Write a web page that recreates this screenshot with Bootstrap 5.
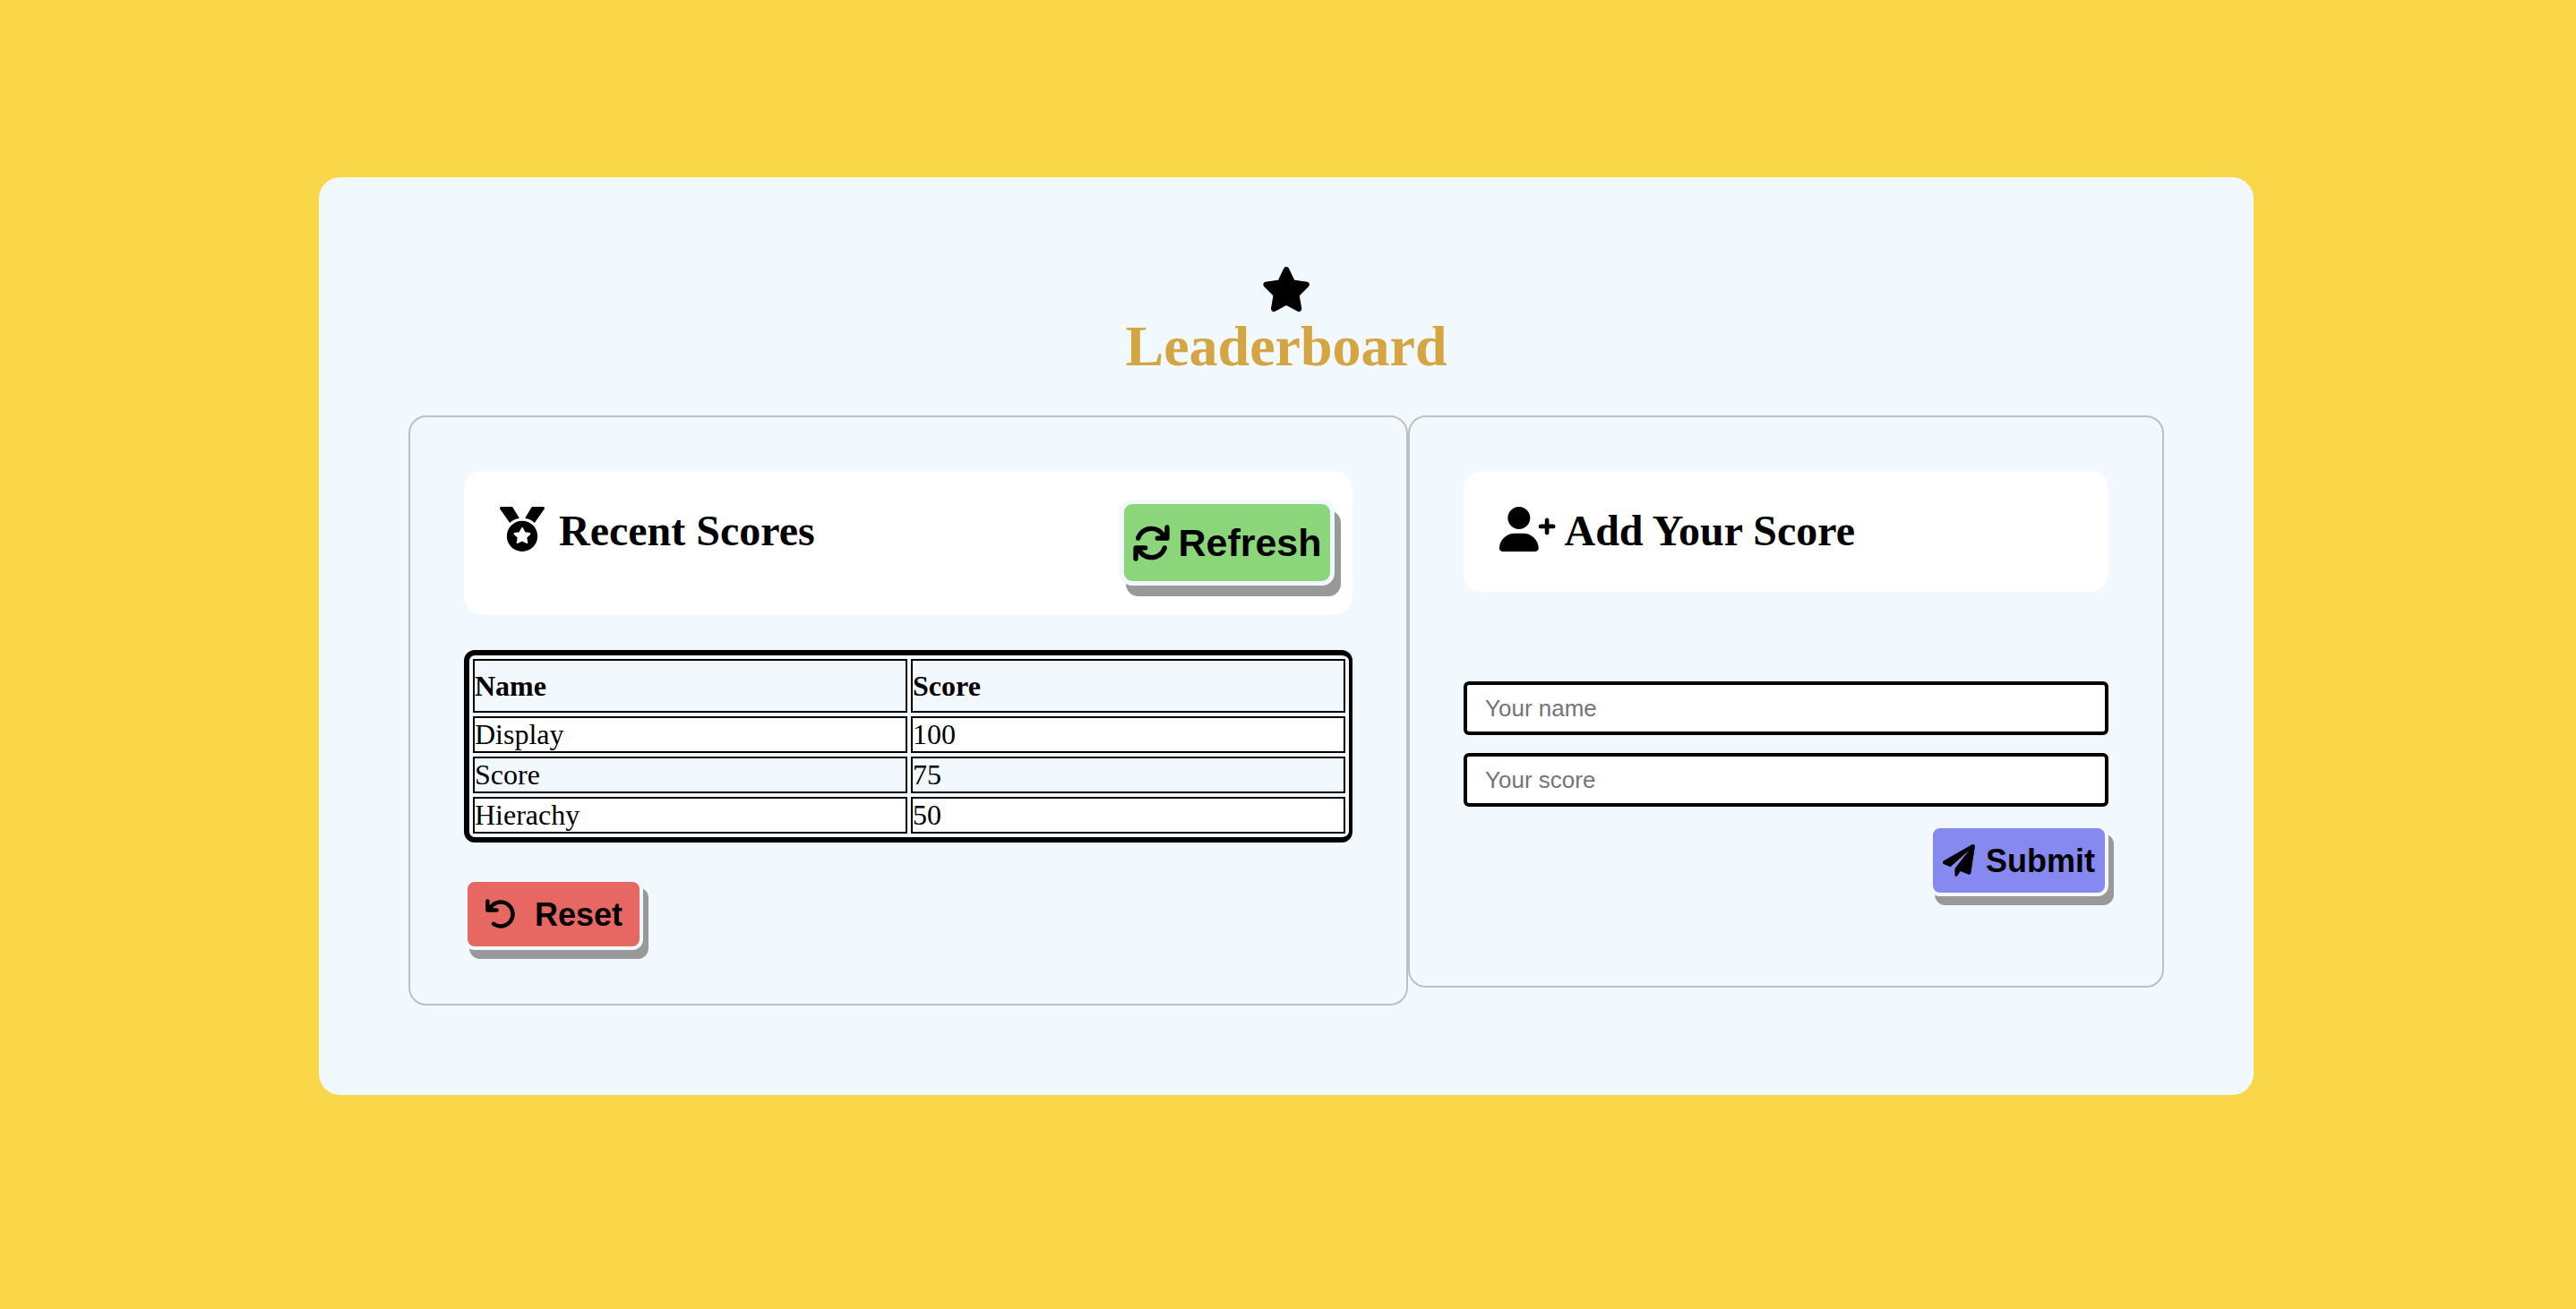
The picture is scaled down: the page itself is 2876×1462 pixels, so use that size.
<!DOCTYPE html>
<html lang="en">
<head>
<meta charset="utf-8">
<meta name="viewport" content="width=device-width, initial-scale=1">
<title>Leaderboard</title>
<link rel="stylesheet" href="https://cdn.jsdelivr.net/npm/bootstrap@5.3.0/dist/css/bootstrap.min.css">
<style>
  body { background: #fad749; color: #000; font-family: "Liberation Serif", "Times New Roman", serif; line-height: normal; padding: 198px 4px 40px 0; }
  .board { max-width: 2160px; padding: 100px; background: #f1f8fe; border-radius: 24px; }
  .board-title { font-size: 64px; line-height: 74px; font-weight: 700; color: #d4a540; margin: 2px 0 40px; }
  .panels { display: grid; grid-template-columns: 279fr 211fr; }
  .panel { border: 2px solid #c0c0c0; border-radius: 20px; padding: 60px; min-width: 0; }
  .panel-form { padding-bottom: 100px; }
  .panel-head { background: #fff; border-radius: 20px; padding: 40px 40px 42px; }
  .head-scores { padding: 32px 20px 32px 40px; }
  .head-scores h2 { padding-top: 8px; }
  .panel-head h2 { font-size: 48px; line-height: 53px; font-weight: 700; margin: 0; }
  .icon { display: block; flex: none; fill: currentColor; height: 50px; }
  .medal-gap { gap: 16px; }
  .user-gap { gap: 10px; }
  .score-table { width: 100%; margin: 40px 0; border: 6px solid #000; border-right-width: 4px; border-radius: 12px; border-collapse: separate; border-spacing: 4px; font-size: 32px; line-height: 37px; }
  .score-table th, .score-table td { border: 2px solid #000; padding: 0; width: 50%; }
  .score-table th { height: 60px; font-weight: 700; }
  .score-table tbody tr:nth-child(odd) td { background: #fff; }
  .push { height: 80px; min-width: 200px; padding: 0 8px; border: 4px solid #f1f8fe; border-radius: 12px; box-shadow: 6px 10px 0 #999; color: #000; font: 700 36px/41px "Liberation Sans", Arial, sans-serif; }
  .push .icon { height: 36px; }
  .push-reset { background: #e76862; gap: 20px; }
  .push-submit { background: #8589f0; gap: 12px; }
  .push-refresh { background: #8bd67b; gap: 8px; height: 96px; min-width: 240px; border-width: 5px; border-radius: 14px; box-shadow: 7px 12px 0 #999; font-size: 43px; line-height: 49px; }
  .push-refresh .icon { height: 43px; }
  .score-form { margin-top: 100px; gap: 20px; }
  .score-form input { width: 100%; height: 60px; border: 4px solid #000; border-radius: 6px; padding: 0 20px; background: #fff; font: 26px/30px "Liberation Sans", Arial, sans-serif; }
  .score-form input::placeholder { color: #757575; opacity: 1; }
</style>
</head>
<body>
<main class="board mx-auto">
  <header class="d-flex flex-column align-items-center">
    <svg class="icon" viewBox="0 0 576 512" aria-hidden="true"><path d="M316.9 18C311.6 7 300.4 0 288.1 0s-23.4 7-28.8 18L195 150.3 51.4 171.5c-12 1.8-22 10.2-25.7 21.7s-.7 24.2 7.9 32.7L137.8 329 113.2 474.7c-2 12 3 24.2 12.9 31.3s23 8 33.8 2.3l128.3-68.5 128.3 68.5c10.8 5.7 23.9 4.9 33.8-2.3s14.9-19.3 12.9-31.3L438.5 329 542.7 225.9c8.6-8.5 11.7-21.2 7.9-32.7s-13.7-19.9-25.7-21.7L381.2 150.3 316.9 18z"/></svg>
    <h1 class="board-title">Leaderboard</h1>
  </header>
  <div class="panels align-items-start">
    <section class="panel">
      <div class="panel-head head-scores d-flex justify-content-between align-items-start">
        <h2 class="d-flex medal-gap">
          <svg class="icon" viewBox="0 0 512 512" aria-hidden="true"><path d="M223.7 130.8L149.1 7.77C147.1 2.949 141.9 0 136.3 0H16.03c-12.95 0-20.53 14.58-13.1 25.18l111.3 158.9C143.9 156.4 181.7 137.3 223.7 130.8zM256 160c-97.25 0-176 78.75-176 176S158.8 512 256 512s176-78.75 176-176S353.3 160 256 160zM348.5 317.3l-37.88 37l8.875 52.25c1.625 9.25-8.25 16.5-16.63 12l-46.88-24.62L209.1 418.5c-8.375 4.5-18.25-2.75-16.63-12l8.875-52.25l-37.88-37C156.6 310.6 160.5 299 169.9 297.6l52.25-7.625L245.7 242.5c2-4.25 6.125-6.375 10.25-6.375S264.2 238.3 266.2 242.5l23.5 47.5l52.25 7.625C351.6 299 355.4 310.6 348.5 317.3zM495.1 0H375.7c-5.621 0-10.83 2.949-13.72 7.77l-73.76 122.1c42 6.5 79.88 25.62 109.5 53.38l111.3-158.9C516.5 14.58 508.9 0 495.1 0z"/></svg>
          Recent Scores
        </h2>
        <button type="button" class="push push-refresh d-flex align-items-center justify-content-center">
          <svg class="icon" viewBox="0 0 512 512" aria-hidden="true"><path d="M464 16c-17.67 0-32 14.31-32 32v74.09C392.1 66.52 327.4 32 256 32C161.5 32 78.59 92.34 49.58 182.2c-5.438 16.81 3.797 34.88 20.61 40.28c16.89 5.5 34.88-3.812 40.3-20.59C130.9 138.5 189.4 96 256 96c50.5 0 96.26 24.55 124.4 64H336c-17.67 0-32 14.31-32 32s14.33 32 32 32h128c17.67 0 32-14.31 32-32V48C496 30.31 481.7 16 464 16zM441.8 289.6c-16.92-5.438-34.88 3.812-40.3 20.59C381.1 373.5 322.6 416 256 416c-50.5 0-96.25-24.55-124.4-64H176c17.67 0 32-14.31 32-32s-14.33-32-32-32h-128c-17.67 0-32 14.31-32 32v144c0 17.69 14.33 32 32 32s32-14.31 32-32v-74.09C119.9 445.5 184.6 480 255.1 480c94.45 0 177.4-60.34 206.4-150.2C467.9 313 458.6 294.1 441.8 289.6z"/></svg>
          Refresh
        </button>
      </div>
      <table class="score-table">
        <thead>
          <tr><th scope="col">Name</th><th scope="col">Score</th></tr>
        </thead>
        <tbody>
          <tr><td>Display</td><td>100</td></tr>
          <tr><td>Score</td><td>75</td></tr>
          <tr><td>Hierachy</td><td>50</td></tr>
        </tbody>
      </table>
      <button type="button" class="push push-reset d-flex align-items-center justify-content-center">
        <svg class="icon" viewBox="0 0 512 512" aria-hidden="true"><path d="M480 256c0 123.4-100.5 223.9-223.9 223.9c-48.86 0-95.19-15.58-134.2-44.86c-14.14-10.59-17-30.66-6.391-44.81c10.61-14.09 30.69-16.97 44.8-6.375c27.84 20.91 61 31.94 95.89 31.94C344.3 415.8 416 344.1 416 256s-71.67-159.8-159.8-159.8C205.9 96.22 158.6 120.3 128.6 160H192c17.67 0 32 14.31 32 32S209.7 224 192 224H48c-17.67 0-32-14.31-32-32V48c0-17.69 14.33-32 32-32s32 14.31 32 32v70.23C122.1 64.58 186.1 32.11 256.1 32.11C379.5 32.11 480 132.6 480 256z"/></svg>
        Reset
      </button>
    </section>
    <section class="panel panel-form">
      <div class="panel-head">
        <h2 class="d-flex user-gap">
          <svg class="icon" viewBox="0 0 640 512" aria-hidden="true"><path d="M224 256c70.7 0 128-57.31 128-128S294.7 0 224 0C153.3 0 96 57.31 96 128S153.3 256 224 256zM274.7 304H173.3C77.61 304 0 381.6 0 477.3C0 496.5 15.52 512 34.66 512h378.7C432.5 512 448 496.5 448 477.3C448 381.6 370.4 304 274.7 304zM616 200h-48v-48C568 138.8 557.3 128 544 128s-24 10.75-24 24v48h-48C458.8 200 448 210.8 448 224s10.75 24 24 24h48v48C520 309.3 530.8 320 544 320s24-10.75 24-24v-48h48C629.3 248 640 237.3 640 224S629.3 200 616 200z"/></svg>
          Add Your Score
        </h2>
      </div>
      <form class="score-form d-flex flex-column">
        <input type="text" id="player-name" placeholder="Your name" aria-label="Your name">
        <input type="text" id="player-score" placeholder="Your score" aria-label="Your score">
        <button type="button" class="push push-submit d-flex align-items-center justify-content-center align-self-end">
          <svg class="icon" viewBox="0 0 512 512" aria-hidden="true"><path d="M511.6 36.86l-64 415.1c-1.5 9.734-7.375 18.22-15.97 23.05c-4.844 2.719-10.27 4.097-15.68 4.097c-4.188 0-8.319-.8154-12.29-2.472l-122.6-51.1l-50.86 76.29C226.3 508.5 219.8 512 212.8 512C201.3 512 192 502.7 192 491.2v-96.18c0-7.115 2.372-14.03 6.742-19.64L416 96l-293.7 264.3L19.69 317.5C8.438 312.8 .8125 302.2 .0625 289.1s5.469-23.72 16.06-29.99l448-255.1c10.69-6.109 23.88-5.547 34 1.406S513.5 24.72 511.6 36.86z"/></svg>
          Submit
        </button>
      </form>
    </section>
  </div>
</main>
<script src="https://cdn.jsdelivr.net/npm/bootstrap@5.3.0/dist/js/bootstrap.bundle.min.js"></script>
</body>
</html>
